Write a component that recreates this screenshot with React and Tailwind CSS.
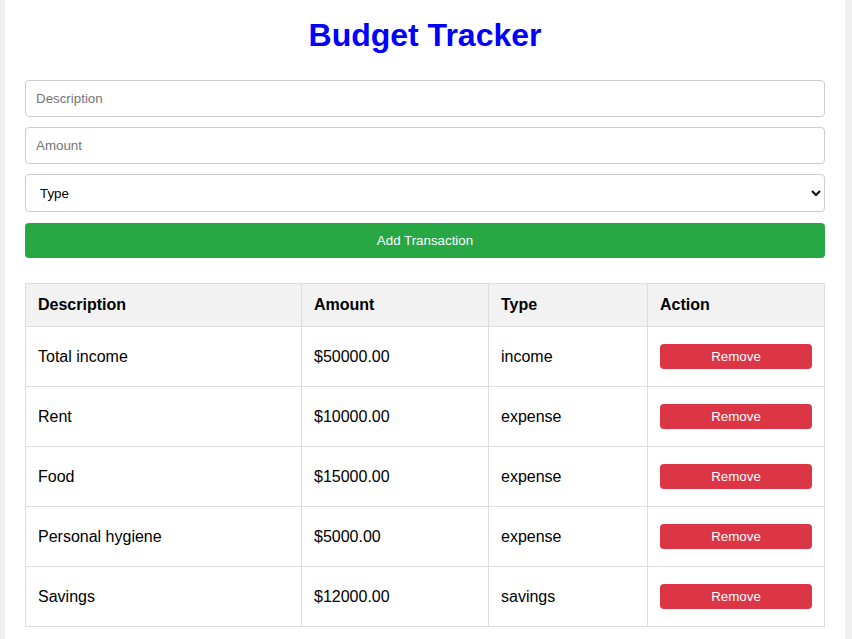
import { useState } from "react";

const initial = [
  { id: 1, description: "Total income", amount: 50000, type: "income" },
  { id: 2, description: "Rent", amount: 10000, type: "expense" },
  { id: 3, description: "Food", amount: 15000, type: "expense" },
  { id: 4, description: "Personal hygiene", amount: 5000, type: "expense" },
  { id: 5, description: "Savings", amount: 12000, type: "savings" },
];

export default function App() {
  const [items, setItems] = useState(initial);
  const [description, setDescription] = useState("");
  const [amount, setAmount] = useState("");
  const [type, setType] = useState("");

  const add = () => {
    if (!description || !amount || !type) return;
    setItems([...items, { id: Date.now(), description, amount: parseFloat(amount), type }]);
    setDescription("");
    setAmount("");
    setType("");
  };

  const remove = (id) => setItems(items.filter((t) => t.id !== id));

  return (
    <div className="min-h-screen bg-[#f0f0f0] font-['Liberation_Sans',Arial,sans-serif] text-black">
      <div className="ml-[5px] w-[840px] min-h-screen bg-white px-5 pt-[17px]">
        <h1 className="h-[37px] text-center text-[32px] font-bold leading-[37px] text-[#0000ff]">Budget Tracker</h1>
        <div className="mt-[26px] flex flex-col">
          <input
            value={description}
            onChange={(e) => setDescription(e.target.value)}
            placeholder="Description"
            className="h-[37px] w-full rounded-[4px] border border-[#ccc] px-[10px] text-[13.33px] placeholder:text-[#757575] outline-none"
          />
          <input
            value={amount}
            onChange={(e) => setAmount(e.target.value)}
            placeholder="Amount"
            type="number"
            className="mt-[10px] h-[37px] w-full rounded-[4px] border border-[#ccc] px-[10px] text-[13.33px] placeholder:text-[#757575] outline-none"
          />
          <select
            value={type}
            onChange={(e) => setType(e.target.value)}
            className="mt-[10px] h-[38px] w-full rounded-[4px] border border-[#ccc] bg-white px-[10px] text-[13.33px] outline-none"
          >
            <option value="">Type</option>
            <option value="income">Income</option>
            <option value="expense">Expense</option>
            <option value="savings">Savings</option>
          </select>
          <button
            onClick={add}
            className="mt-[11px] h-[35px] w-full rounded-[4px] bg-[#28a745] text-[13.33px] text-white"
          >
            Add Transaction
          </button>
        </div>

        <table className="mt-[25px] w-full table-fixed border-collapse text-[16px]">
          <colgroup>
            <col className="w-[276px]" />
            <col className="w-[187px]" />
            <col className="w-[159px]" />
            <col />
          </colgroup>
          <thead>
            <tr className="h-[43px] bg-[#f2f2f2]">
              <th className="border border-[#ddd] px-3 text-left font-bold">Description</th>
              <th className="border border-[#ddd] px-3 text-left font-bold">Amount</th>
              <th className="border border-[#ddd] px-3 text-left font-bold">Type</th>
              <th className="border border-[#ddd] px-3 text-left font-bold">Action</th>
            </tr>
          </thead>
          <tbody>
            {items.map((t) => (
              <tr key={t.id} className="h-[60px]">
                <td className="border border-[#ddd] px-3">{t.description}</td>
                <td className="border border-[#ddd] px-3">${t.amount.toFixed(2)}</td>
                <td className="border border-[#ddd] px-3">{t.type}</td>
                <td className="border border-[#ddd] px-3">
                  <button
                    onClick={() => remove(t.id)}
                    className="block h-[25px] w-full rounded-[4px] bg-[#dc3545] text-[13.33px] text-white"
                  >
                    Remove
                  </button>
                </td>
              </tr>
            ))}
          </tbody>
        </table>
      </div>
    </div>
  );
}
